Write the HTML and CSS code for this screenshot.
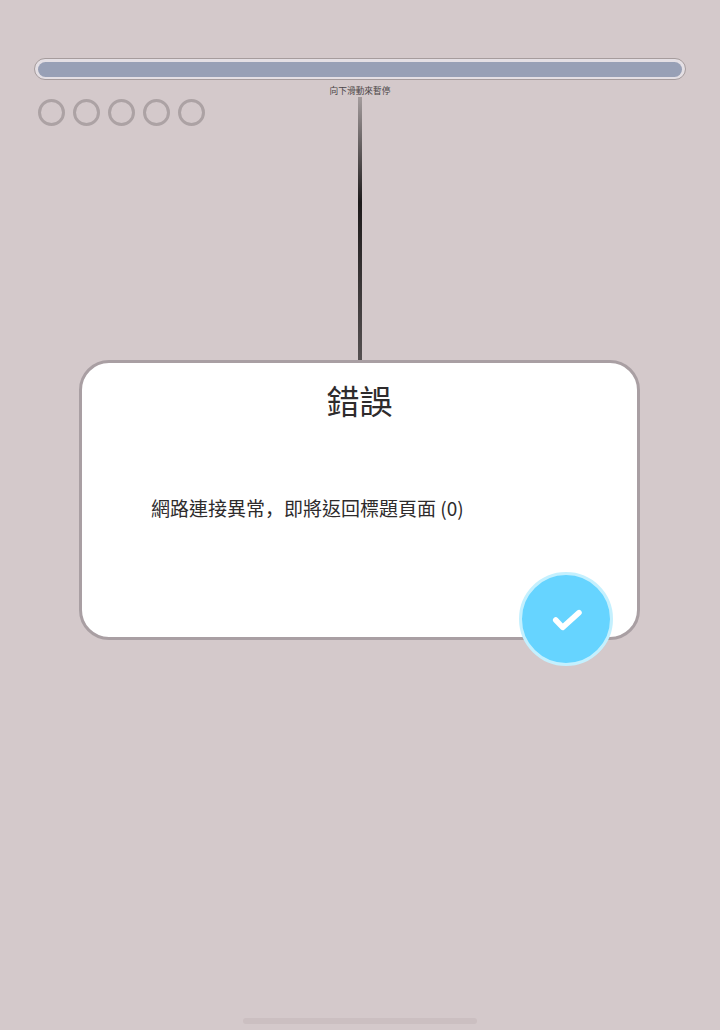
FILE: index.html
```html
<!DOCTYPE html>
<html lang="zh-Hant">
<head>
<meta charset="utf-8">
<title>錯誤</title>
<link rel="stylesheet" href="styles.css">
</head>
<body>
<main class="page">
  <div class="progress"><div class="progress-fill"></div></div>
  <div class="stage">
    <div class="dots">
      <span class="dot"></span><span class="dot"></span><span class="dot"></span><span class="dot"></span><span class="dot"></span>
    </div>
    <div class="pull">
      <div class="hint">向下滑動來暫停</div>
      <div class="cord"></div>
    </div>
  </div>
  <section class="dialog">
    <h1 class="title">錯誤</h1>
    <p class="message">網路連接異常<span class="comma" lang="zh-Hans">&#xFF0C;</span>即將返回標題頁面 (0)</p>
    <button class="ok" type="button" aria-label="確定">
      <svg class="ok-icon" viewBox="0 0 32 32" width="32" height="32"><path d="M5.7 17 L12.7 24.4 L29 9.6" fill="none" stroke="#fff" stroke-width="5.5" stroke-linecap="round" stroke-linejoin="round"/></svg>
    </button>
  </section>
  <div class="home"></div>
</main>
</body>
</html>
```
FILE: styles.css
```css
* { box-sizing: border-box; }
html, body { margin: 0; height: 100%; }
body {
  background: #d4c9cb;
  font-family: "Noto Sans CJK TC", "Noto Sans", sans-serif;
  color: #2e2b2c;
  overflow: hidden;
}
.page {
  height: 1030px;
  padding: 58px 0 6px;
  display: flex;
  flex-direction: column;
}
.progress {
  margin: 0 34px;
  height: 22px;
  border: 1px solid #a69c9d;
  border-radius: 11px;
  background: #e4dfe4;
  padding: 2.5px 3px;
}
.progress-fill {
  height: 100%;
  border-radius: 8px;
  background: #98a0b6;
}
.stage {
  height: 280px;
  margin: 0 34px;
  display: grid;
  grid-template-columns: 1fr auto 1fr;
}
.dots {
  display: flex;
  gap: 8px;
  padding: 19px 0 0 4px;
}
.dot {
  width: 27px;
  height: 27px;
  border: 3px solid #aca2a4;
  border-radius: 50%;
}
.pull {
  display: flex;
  flex-direction: column;
  align-items: center;
  padding-top: 4px;
}
.hint {
  font-size: 8.7px;
  line-height: 13px;
  color: #4a4546;
  white-space: nowrap;
}
.cord {
  flex: 1;
  width: 4px;
  background: linear-gradient(to bottom, #a49c9d 0%, #1d1a1b 40%, #555051 100%);
}
.dialog {
  position: relative;
  margin-left: 79px;
  width: 561px;
  height: 280px;
  background: #fff;
  border: 3px solid #a99fa3;
  border-radius: 30px;
}
.title {
  margin: 15px 0 0;
  font-size: 33px;
  font-weight: 400;
  line-height: 44px;
  text-align: center;
}
.message {
  margin: 72px 0 0 69px;
  font-size: 19px;
  line-height: 28px;
  white-space: nowrap;
}
.comma {
  font-family: "Noto Sans CJK SC", sans-serif;
}
.ok {
  position: absolute;
  right: 24px;
  bottom: -29px;
  width: 94px;
  height: 94px;
  padding: 0;
  display: flex;
  align-items: center;
  justify-content: center;
  background: #66d4ff;
  border: 3px solid #c4f0fe;
  border-radius: 50%;
}
.home {
  margin: auto auto 0;
  width: 234px;
  height: 6px;
  border-radius: 3px;
  background: #cbbfc1;
}
```
